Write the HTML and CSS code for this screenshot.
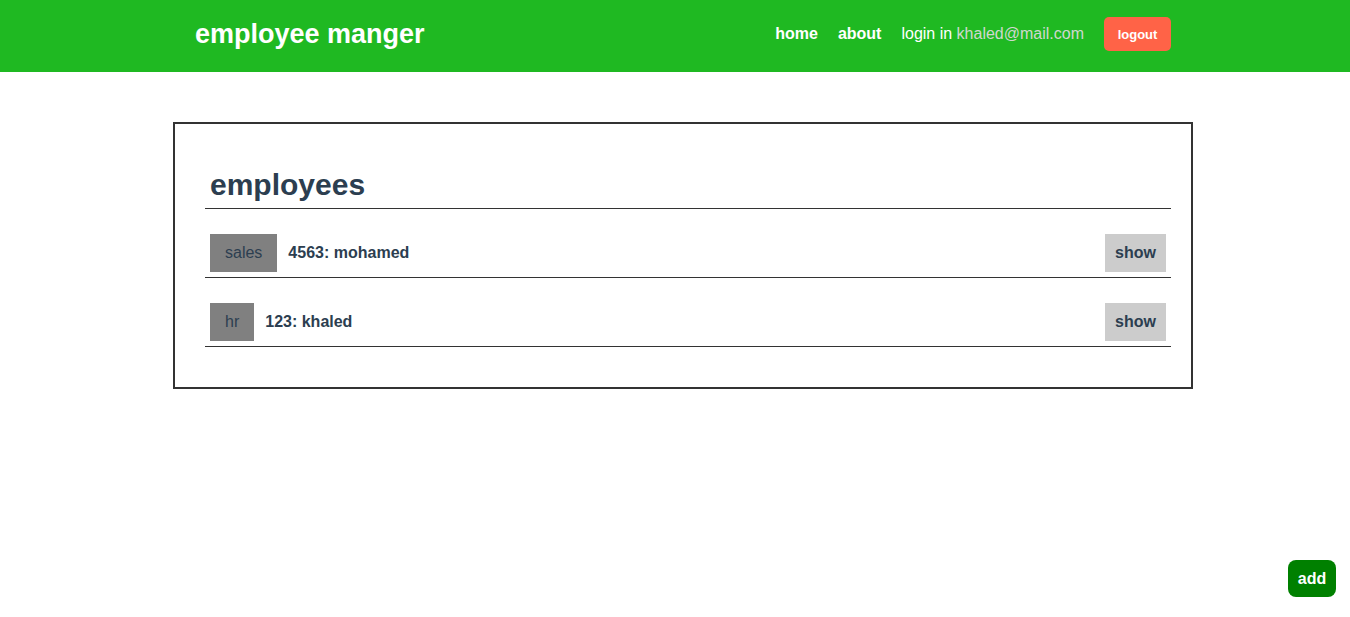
FILE: index.html
```html
<!DOCTYPE html>
<html>
<head>
<meta charset="utf-8">
<title>employee manger</title>
<link rel="stylesheet" href="styles.css">
</head>
<body>
<header class="topbar">
  <div class="topbar-inner">
    <div class="brand">employee manger</div>
    <nav class="nav">
      <a class="nav-link" href="#">home</a>
      <a class="nav-link" href="#">about</a>
      <span class="login">login in <span class="email">khaled@mail.com</span></span>
      <button class="logout">logout</button>
    </nav>
  </div>
</header>
<main class="page">
  <section class="card">
    <h2 class="card-title">employees</h2>
    <ul class="list">
      <li class="row">
        <span class="badge">sales</span>
        <span class="name">4563: mohamed</span>
        <button class="show">show</button>
      </li>
      <li class="row">
        <span class="badge">hr</span>
        <span class="name">123: khaled</span>
        <button class="show">show</button>
      </li>
    </ul>
  </section>
</main>
<button class="add">add</button>
</body>
</html>
```

FILE: styles.css
```css
* { box-sizing: border-box; }
html, body { margin: 0; padding: 0; }
body {
  font-family: "Liberation Sans", Arial, sans-serif;
  color: #2c3e50;
  background: #fff;
}
.topbar {
  background: #1fb922;
  height: 72px;
}
.topbar-inner {
  width: 1000px;
  margin: 0 auto;
  height: 72px;
  padding: 0 4px 4px 20px;
  display: flex;
  align-items: center;
  justify-content: space-between;
}
.brand {
  color: #fff;
  font-size: 27px;
  font-weight: bold;
}
.nav {
  display: flex;
  align-items: center;
  gap: 20px;
  font-size: 16px;
}
.nav-link {
  color: #fff;
  font-weight: bold;
  text-decoration: none;
}
.login { color: #fff; }
.email { color: #cfd8cf; }
.logout {
  background: #ff6347;
  color: #fff;
  border: none;
  border-radius: 5px;
  width: 67px;
  height: 34px;
  font-family: inherit;
  font-size: 13px;
  font-weight: bold;
  padding: 0;
}
.page {
  width: 1000px;
  margin: 50px auto 0;
}
.card {
  margin-left: -2px;
  width: 1020px;
  border: 2px solid #333;
  padding: 45px 20px 40px 30px;
}
.card-title {
  margin: 0;
  font-size: 30px;
  line-height: 32px;
  font-weight: bold;
  padding: 0 5px 7px;
  border-bottom: 1px solid #333;
}
.list {
  list-style: none;
  margin: 0;
  padding: 0;
}
.row {
  margin-top: 25px;
  padding: 0 5px 5px;
  border-bottom: 1px solid #333;
  display: flex;
  align-items: center;
}
.badge {
  background: #808080;
  color: #2c3e50;
  font-size: 16px;
  line-height: 38px;
  padding: 0 15px;
  height: 38px;
}
.name {
  margin-left: 11px;
  font-weight: bold;
  font-size: 16px;
  flex: 1;
}
.show {
  background: #ccc;
  border: none;
  color: #2c3e50;
  font-family: inherit;
  font-size: 16px;
  font-weight: bold;
  width: 61px;
  height: 38px;
  padding: 0;
}
.add {
  position: fixed;
  right: 14px;
  bottom: 20px;
  width: 48px;
  height: 37px;
  background: #008000;
  color: #fff;
  border: none;
  border-radius: 8px;
  font-family: inherit;
  font-size: 16px;
  font-weight: bold;
  padding: 0;
}
```
